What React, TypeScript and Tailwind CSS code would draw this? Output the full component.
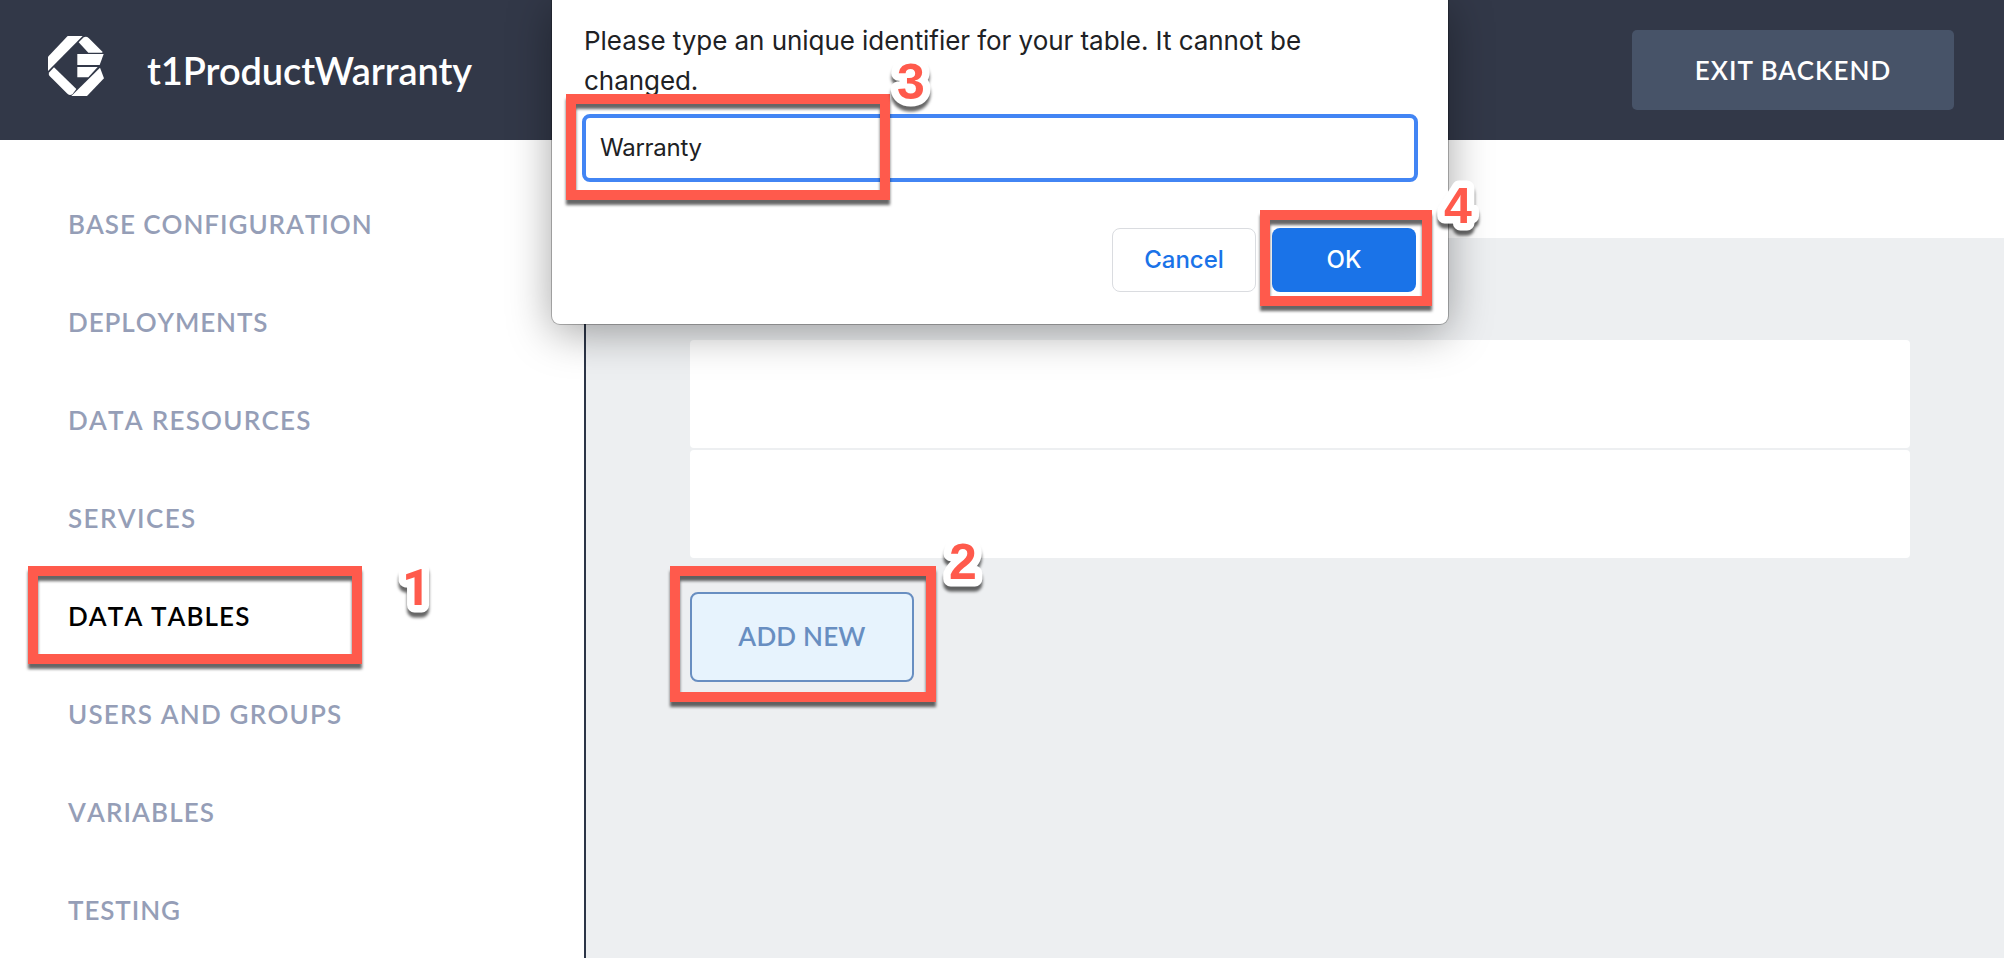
import React from "react";

const NAV: { label: string; tracking: string; active?: boolean }[] = [
  { label: "BASE CONFIGURATION", tracking: "tracking-[0.97px]" },
  { label: "DEPLOYMENTS", tracking: "tracking-[0.9px]" },
  { label: "DATA RESOURCES", tracking: "tracking-[1.25px]" },
  { label: "SERVICES", tracking: "tracking-[1.4px]" },
  { label: "DATA TABLES", tracking: "tracking-[1.1px]", active: true },
  { label: "USERS AND GROUPS", tracking: "tracking-[1.2px]" },
  { label: "VARIABLES", tracking: "tracking-[1.1px]" },
  { label: "TESTING", tracking: "tracking-[0.9px]" },
];

function Logo() {
  return (
    <svg viewBox="24 18 168 180" className="h-[60px] w-[56px] fill-white">
      <path d="M83 18H128L24 123V80Z" />
      <path d="M137 20Q142 20 146 24L188 66L186 68H145L116 37L131 22Q134 20 137 20Z" />
      <path d="M112 72H191L179 105H112Z" />
      <path d="M112 111H173L145 142H112Z" />
      <path d="M180 113L192 145L141 198H94Z" />
      <path d="M42 112L109 177L98 192Q90 198 83 192L28 137Q24 132 28 127Z" />
    </svg>
  );
}

function Frame({ className }: { className: string }) {
  return (
    <div
      className={`absolute border-10 border-[#ff5a4c] [filter:drop-shadow(0_5px_1.5px_rgba(0,0,0,0.6))] ${className}`}
    />
  );
}

function StepNumber({ n, className }: { n: string; className: string }) {
  return (
    <svg
      className={`absolute h-[60px] w-[50px] overflow-visible [filter:drop-shadow(0_5px_1.5px_rgba(0,0,0,0.6))] ${className}`}
    >
      <text
        x="11"
        y="46"
        className="fill-[#ff5a4c] stroke-white stroke-[15px] text-[50px] font-bold [paint-order:stroke] [stroke-linejoin:round]"
      >
        {n}
      </text>
    </svg>
  );
}

function Prompt() {
  return (
    <div className="absolute top-0 left-[552px] h-[324px] w-[896px] rounded-b-lg bg-white px-[30px] pt-[21px] font-[Inter,sans-serif] text-[#202124] shadow-[0_0_0_1px_rgba(0,0,0,0.25),0_8px_44px_rgba(0,0,0,0.36)]">
      <p className="h-[80px] pl-[2px] text-[26px] leading-[40px] tracking-[-0.05px] whitespace-nowrap">
        Please type an unique identifier for your table. It cannot be
        <br />
        changed.
      </p>
      <div className="mt-[13px] flex h-[68px] items-center rounded-lg border-4 border-[#4285f4] pl-[14px] text-[24px] leading-none tracking-[-0.25px]">
        Warranty
      </div>
      <div className="mt-[46px] flex h-[64px] justify-end gap-4 pr-[2px] text-[24px] font-medium">
        <button className="w-[144px] rounded-lg border border-[#dadce0] text-[#1a73e8]">Cancel</button>
        <button className="w-[144px] rounded-lg bg-[#1a73e8] text-white">OK</button>
      </div>
    </div>
  );
}

export default function App() {
  return (
    <div className="relative flex h-[958px] w-[2004px] flex-col overflow-hidden bg-white font-[Lato,sans-serif]">
      <header className="flex h-[140px] shrink-0 items-center justify-between bg-[#323848] pr-[50px] pl-12 text-white">
        <div className="flex items-center">
          <div className="-mt-2">
            <Logo />
          </div>
          <h1 className="ml-[43px] text-[38px] leading-none font-semibold tracking-[-0.07px]">t1ProductWarranty</h1>
        </div>
        <button className="h-20 w-[322px] rounded-[5px] bg-[#475368] pt-px text-[26px] font-semibold tracking-[1px]">
          EXIT BACKEND
        </button>
      </header>
      <div className="flex flex-1">
        <nav className="flex w-[586px] shrink-0 flex-col border-r-2 border-[#2c3547] pt-[35px] pl-[68px] text-[26px] font-semibold [font-kerning:none]">
          {NAV.map((item) => (
            <a
              key={item.label}
              className={`flex h-[98px] shrink-0 items-center whitespace-nowrap ${item.tracking} ${item.active ? "text-black" : "text-[#959eb7]"}`}
            >
              <span>{item.label}</span>
            </a>
          ))}
        </nav>
        <main className="flex flex-1 flex-col">
          <div className="h-[98px] shrink-0 bg-white" />
          <div className="flex flex-1 flex-col items-start bg-[#edeff1] pt-[102px] pr-[94px] pl-[104px]">
            <div className="flex w-full flex-col gap-0.5">
              <div className="h-[108px] rounded bg-white" />
              <div className="h-[108px] rounded bg-white" />
            </div>
            <button className="mt-[34px] h-[90px] w-[224px] rounded-lg border-2 border-[#688ec1] bg-[#e7f3fd] pb-0.5 text-[26px] font-semibold tracking-[0.2px] text-[#688ec1]">
              ADD NEW
            </button>
          </div>
        </main>
      </div>
      <Prompt />
      <Frame className="top-[566px] left-[28px] h-[98px] w-[334px]" />
      <Frame className="top-[566px] left-[670px] h-[136px] w-[266px]" />
      <Frame className="top-[94px] left-[566px] h-[106px] w-[324px]" />
      <Frame className="top-[210px] left-[1260px] h-[96px] w-[172px]" />
      <StepNumber n="1" className="top-[559px] left-[391px] font-[Roboto,sans-serif]" />
      <StepNumber n="2" className="top-[533px] left-[938px] font-['Liberation_Sans',sans-serif]" />
      <StepNumber n="3" className="top-[53px] left-[886px] font-['Liberation_Sans',sans-serif]" />
      <StepNumber n="4" className="top-[177px] left-[1433px] font-['Liberation_Sans',sans-serif]" />
    </div>
  );
}
